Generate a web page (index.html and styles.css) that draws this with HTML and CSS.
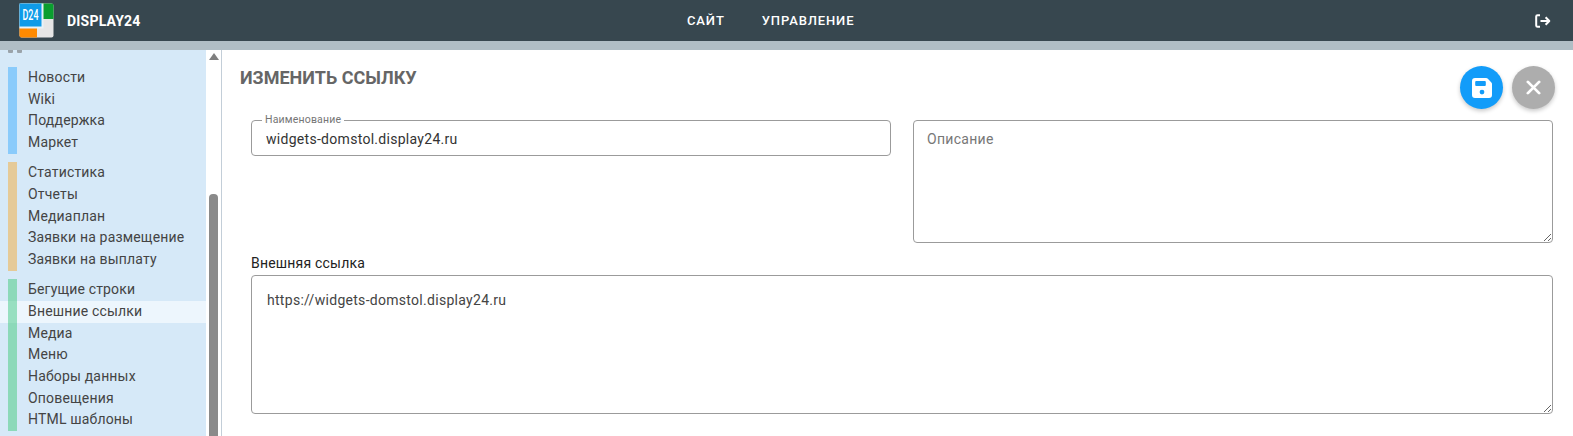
FILE: index.html
```html
<!DOCTYPE html>
<html lang="ru">
<head>
<meta charset="utf-8">
<title>Display24</title>
<link rel="stylesheet" href="styles.css">
</head>
<body>
<header class="topbar">
  <div class="brand">
    <svg class="logo" width="36" height="36" viewBox="0 0 36 36">
      <rect x="0.500" y="0.500" width="34" height="34" rx="2" fill="#e6e6e6"/>
      <path d="M18 .5h14.500a2 2 0 0 1 2 2V16H18Z" fill="#0a9e2f"/>
      <path d="M.5 25H18v9.500H2.500a2 2 0 0 1-2-2Z" fill="#ff8a00"/>
      <rect x="0.500" y="0.500" width="24" height="25" fill="#e8f2f8"/>
      <rect x="0.500" y="0.500" width="22" height="23" fill="#0f9be8"/>
      <text x="3.500" y="17" textLength="16" lengthAdjust="spacingAndGlyphs" class="logo-text">D24</text>
    </svg>
    <span class="brand-name">DISPLAY24</span>
  </div>
  <nav class="topnav">
    <a>САЙТ</a>
    <a>УПРАВЛЕНИЕ</a>
  </nav>
  <svg class="exit" width="16" height="14" viewBox="0 0 16 14" fill="none" stroke="#fff" stroke-width="2" stroke-linejoin="round">
    <path d="M5 1.200H2.600A1.400 1.400 0 0 0 1.200 2.600v8.800a1.400 1.400 0 0 0 1.400 1.400H5"/>
    <path d="M5.500 7H14M10.600 3.200 14.300 7l-3.700 3.800"/>
  </svg>
</header>
<div class="strip"></div>
<div class="layout">
  <aside class="sidebar">
    <div class="menu">
      <div class="grip"><i></i><i></i></div>
      <ul class="group group-blue">
        <li>Новости</li>
        <li>Wiki</li>
        <li>Поддержка</li>
        <li>Маркет</li>
      </ul>
      <ul class="group group-orange">
        <li>Статистика</li>
        <li>Отчеты</li>
        <li>Медиаплан</li>
        <li>Заявки на размещение</li>
        <li>Заявки на выплату</li>
      </ul>
      <ul class="group group-green">
        <li>Бегущие строки</li>
        <li class="active">Внешние ссылки</li>
        <li>Медиа</li>
        <li>Меню</li>
        <li>Наборы данных</li>
        <li>Оповещения</li>
        <li>HTML шаблоны</li>
      </ul>
    </div>
    <div class="scrollbar">
      <span class="arrow"></span>
      <span class="thumb"></span>
    </div>
  </aside>
  <main class="content">
    <div class="title-row">
      <h1>ИЗМЕНИТЬ ССЫЛКУ</h1>
      <div class="actions">
        <button class="fab fab-save" aria-label="Сохранить">
          <svg width="20" height="20" viewBox="0 0 20 20"><path fill="#fff" fill-rule="evenodd" d="M3 0h11.200a2 2 0 0 1 1.400.6l3.800 3.800a2 2 0 0 1 .6 1.400V17a3 3 0 0 1-3 3H3a3 3 0 0 1-3-3V3a3 3 0 0 1 3-3Zm1.200 3a1 1 0 0 0-1 1v3a1 1 0 0 0 1 1h8.600a1 1 0 0 0 1-1V4a1 1 0 0 0-1-1ZM10 11.700a2.400 2.400 0 1 0 0 4.800 2.400 2.400 0 0 0 0-4.800Z"/></svg>
        </button>
        <button class="fab fab-close" aria-label="Закрыть">
          <svg width="15" height="15" viewBox="0 0 16 16" fill="none" stroke="#fff" stroke-width="3" stroke-linecap="round"><path d="M2 2l12 12M14 2 2 14"/></svg>
        </button>
      </div>
    </div>
    <div class="form-grid">
      <fieldset class="field-name">
        <legend>Наименование</legend>
        <input class="name-input" type="text" value="widgets-domstol.display24.ru">
      </fieldset>
      <textarea class="description" placeholder="Описание"></textarea>
    </div>
    <label class="link-label" for="link">Внешняя ссылка</label>
    <textarea class="link-area" id="link">https://widgets-domstol.display24.ru</textarea>
  </main>
</div>
</body>
</html>
```
FILE: styles.css
```css
* { box-sizing: border-box; }
html, body { margin: 0; height: 100%; overflow: hidden; }
body { font-family: Roboto, "Liberation Sans", sans-serif; background: #fff; color: #333; }

.topbar {
  position: relative;
  height: 41px;
  background: #37474f;
  display: flex;
  align-items: center;
  justify-content: space-between;
  padding: 0 22px 0 19px;
}
.brand { display: flex; align-items: center; gap: 12px; }
.logo { display: block; }
.logo-text { font: 500 14px Roboto, sans-serif; fill: #fff; }
.brand-name { color: #fff; font-size: 14px; font-weight: 700; letter-spacing: .2px; }
.topnav {
  position: absolute;
  left: 687px;
  top: 0;
  height: 41px;
  display: flex;
  align-items: center;
  gap: 37px;
}
.topnav a { color: #fff; font-size: 13px; font-weight: 500; letter-spacing: .88px; }
.exit { display: block; }
.strip { height: 9px; background: #b0bec5; }

.layout { display: flex; height: 386px; }
.sidebar { width: 222px; flex: none; display: flex; border-right: 1px solid #c3ced8; overflow: hidden; }
.menu { width: 206px; flex: none; background: #d6e9f8; overflow: hidden; }
.grip { display: flex; gap: 4px; padding-left: 8px; height: 17px; }
.grip i { width: 5px; height: 3px; background: #9aa3aa; border-radius: 0 0 1px 1px; }
.group { list-style: none; margin: 0 0 8.500px; padding: 0; position: relative; }
.group::before { content: ""; position: absolute; left: 8px; top: 0; bottom: 0; width: 9px; }
.group-blue::before { background: #8acbfb; }
.group-orange::before { background: #e5ca98; }
.group-green::before { background: #8cd9b9; }
.group li { position: relative; height: 21.700px; line-height: 21.700px; padding-left: 28px; font-size: 14px; letter-spacing: .17px; color: #444; white-space: nowrap; }
.group li.active { background: #edf6fd; }
.group li.active::before { content: ""; position: absolute; left: 8px; top: 0; bottom: 0; width: 9px; background: #97dfc0; }
.scrollbar { flex: 1; background: #fff; display: flex; flex-direction: column; align-items: center; position: relative; }
.arrow { width: 0; height: 0; margin-top: 3px; border-left: 5px solid transparent; border-right: 5px solid transparent; border-bottom: 7px solid #7f7f7f; }
.thumb { position: absolute; top: 144px; bottom: 0; left: 3px; width: 9px; background: #8a8a8a; border-radius: 4px 4px 0 0; }

.content { flex: 1; min-width: 0; padding: 0 20px 0 29px; }
.title-row { height: 70px; position: relative; }
h1 { margin: 0 0 0 -11px; padding: 17px 0 0; font-size: 18px; font-weight: 700; color: #666; line-height: 22px; }
.actions { position: absolute; right: -2px; top: 16px; display: flex; gap: 9px; }
.fab { width: 43px; height: 43px; padding: 0; border: 0; border-radius: 50%; display: flex; align-items: center; justify-content: center; box-shadow: 0 2px 4px rgba(0,0,0,.22); }
.fab-save { background: #129cf9; }
.fab-close { background: #adadad; }

.form-grid { display: grid; grid-template-columns: 640px 640px; column-gap: 22px; height: 134px; align-items: start; }
.field-name { margin: -4px 0 0; padding: 0 14px; height: 40px; border: 1px solid #9b9b9b; border-radius: 4px; min-width: 0; }
.field-name legend { padding: 0 3px; margin-left: -4px; font-size: 10.500px; line-height: 8px; color: #757575; letter-spacing: .18px; }
.name-input { display: block; width: 100%; height: 27px; border: 0; padding: 0; margin-top: 1px; outline: 0; background: none; font: 14px Roboto, sans-serif; letter-spacing: .29px; color: #333; }
textarea { display: block; border: 1px solid #9b9b9b; border-radius: 4px; outline: 0; background: #fff; font: 14px Roboto, sans-serif; letter-spacing: .29px; color: #444; resize: both; }
.description { width: 640px; height: 123px; padding: 10px 13px; }
.description::placeholder { color: #777; opacity: 1; }
.link-label { display: block; font-size: 14px; line-height: 18px; letter-spacing: .2px; color: #222; }
.link-area { width: 1302px; height: 139px; margin-top: 3px; padding: 16px 15px; }
```
